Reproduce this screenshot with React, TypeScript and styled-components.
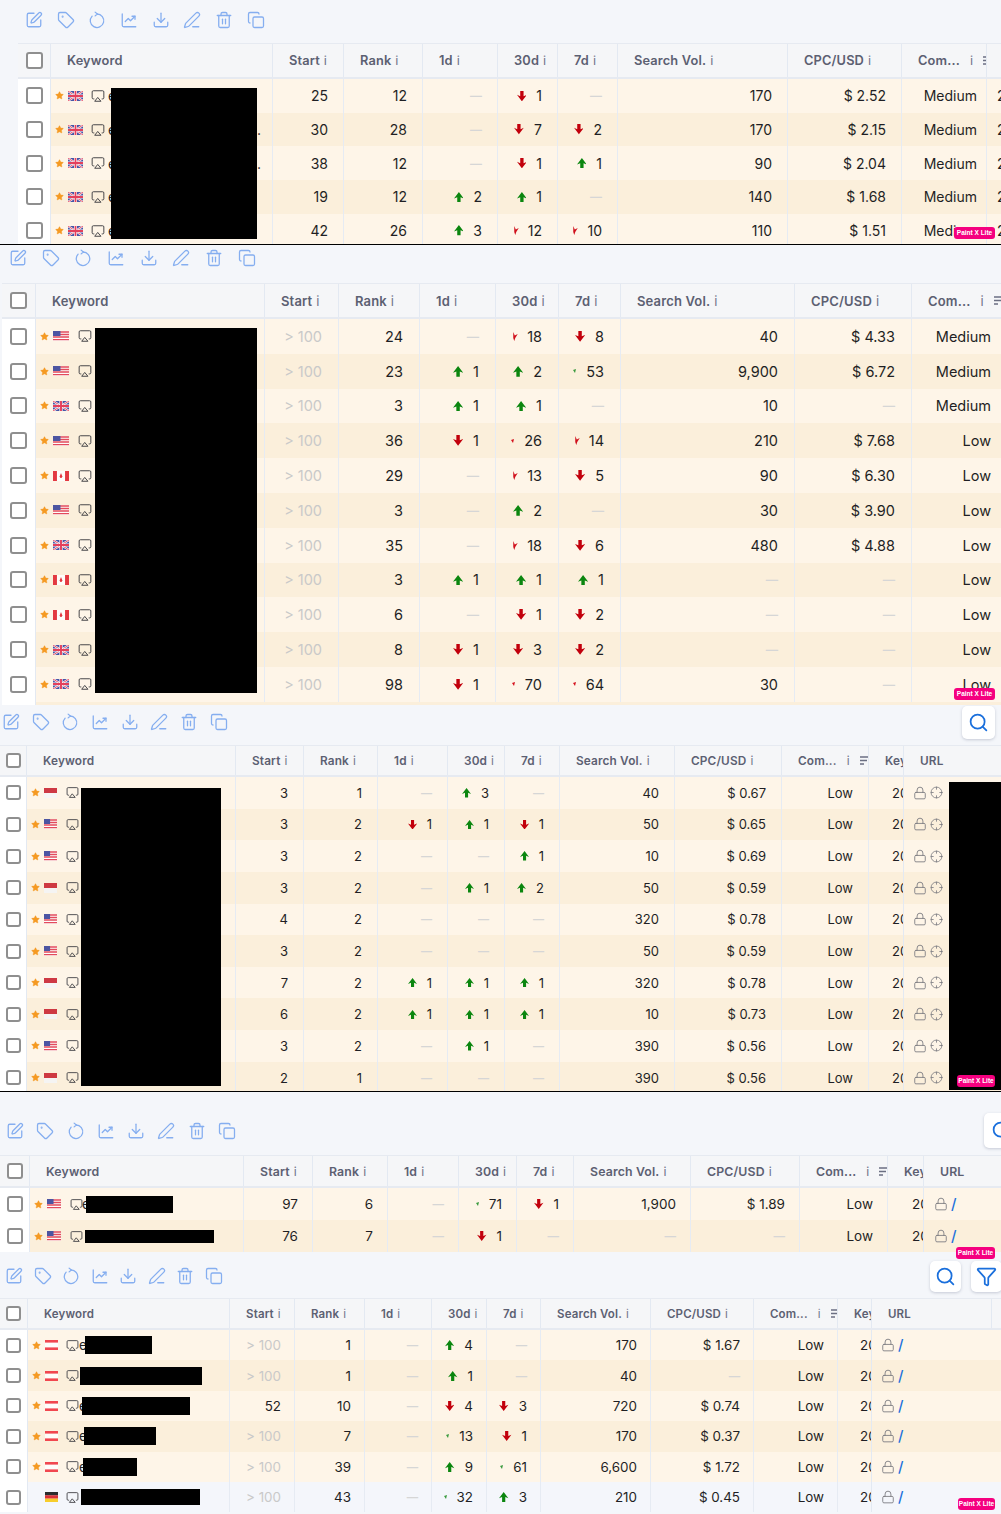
import React from "react";
import styled, { createGlobalStyle } from "styled-components";
import { Airplay, Copy, Crosshair, Download, Filter, Lock, PenLine, Search, SquarePen, Star, Tag, Trash2 } from "lucide-react";

const GlobalStyle = createGlobalStyle`
  html, body { margin: 0; padding: 0; background: #f4f6fa; }
  body { font-family: Inter, "Liberation Sans", sans-serif; color: #1f1f24; }
`;

const Page = styled.div`
  position: relative;
  width: 1001px;
  height: 1514px;
  overflow: hidden;
  background: #f4f6fa;
`;

const Panel = styled.section<{ $h: number; $left: number; $font: number; $line?: boolean }>`
  position: relative;
  box-sizing: border-box;
  height: ${(p) => p.$h}px;
  padding-left: ${(p) => p.$left}px;
  overflow: hidden;
  font-size: ${(p) => p.$font}px;
  border-bottom: ${(p) => (p.$line ? "1px solid #000" : "none")};
`;

const Toolbar = styled.div<{ $h: number; $top: number; $start: number; $pitch: number }>`
  box-sizing: border-box;
  display: flex;
  align-items: flex-start;
  height: ${(p) => p.$h}px;
  margin-left: ${(p) => p.$start}px;
  padding-top: ${(p) => p.$top}px;
  gap: ${(p) => p.$pitch - 18}px;
  color: #85aef0;
`;

const ToolIcon = styled.span`
  display: flex;
  width: 18px;
  height: 18px;
  flex: none;
`;

const Actions = styled.div<{ $top: number; $right: number }>`
  display: flex;
  gap: 10px;
  margin-left: auto;
  margin-top: ${(p) => p.$top}px;
  margin-right: ${(p) => p.$right}px;
`;

const ActionButton = styled.div<{ $size: number }>`
  display: flex;
  align-items: center;
  justify-content: center;
  width: ${(p) => p.$size}px;
  height: ${(p) => p.$size}px;
  flex: none;
  background: #fff;
  border-radius: 5px;
  box-shadow: 0 1px 3px rgba(90, 100, 130, 0.3);
  color: #1a6fdc;
`;

const Row = styled.div<{ $cols: string; $h: number; $bg: string }>`
  display: grid;
  grid-template-columns: ${(p) => p.$cols};
  height: ${(p) => p.$h}px;
  background: ${(p) => p.$bg};
`;

const HeadRow = styled(Row)`
  box-sizing: border-box;
  border-top: 1px solid #e6eaf1;
  border-bottom: 2px solid #e6eaf1;
`;

const HeadCell = styled.div<{ $size: number }>`
  display: flex;
  align-items: center;
  padding-left: 16px;
  overflow: hidden;
  white-space: nowrap;
  font-size: ${(p) => p.$size}px;
  font-weight: 600;
  letter-spacing: 0.15px;
  color: #5c6072;
  border-right: 1px solid #e3e9f2;
`;

const InfoMark = styled.span`
  margin-left: 4px;
  font-weight: 400;
  color: #70748a;
`;

const SpacedMark = styled(InfoMark)`
  margin-left: 10px;
  margin-right: 10px;
`;

const CheckCell = styled.div<{ $bg: string }>`
  display: flex;
  align-items: center;
  justify-content: center;
  background: ${(p) => p.$bg};
  border-right: 1px solid #e3e9f2;
`;

const CheckBox = styled.span<{ $size: number }>`
  box-sizing: border-box;
  display: block;
  width: ${(p) => p.$size}px;
  height: ${(p) => p.$size}px;
  background: #fff;
  border: 2px solid #8f8f8f;
  border-radius: 3px;
`;

const Cell = styled.div<{ $pad: number }>`
  display: flex;
  align-items: center;
  justify-content: flex-end;
  gap: 10px;
  padding-right: ${(p) => p.$pad}px;
  white-space: nowrap;
  overflow: hidden;
  border-right: 1px solid #e6ebf3;
`;

const Muted = styled.span`
  color: #c9c9c9;
`;

const Dash = styled.span`
  font-size: 0.85em;
  font-weight: 600;
  color: #d6d6d6;
`;

const KeywordCell = styled.div`
  display: flex;
  align-items: center;
  padding-left: 4px;
  overflow: hidden;
  border-right: 1px solid #e6ebf3;
`;

const StarSlot = styled.span`
  display: flex;
  width: 9px;
  flex: none;
  margin-right: 4px;
  color: #f59a23;
`;

const FlagSlot = styled.span<{ $w: number; $gap: number }>`
  display: flex;
  width: ${(p) => p.$w}px;
  height: 10px;
  flex: none;
  margin-right: ${(p) => p.$gap}px;
  opacity: 0.88;

  svg {
    width: 100%;
    height: 100%;
  }
`;

const ScreenSlot = styled.span`
  display: flex;
  flex: none;
  color: #3b3b40;
`;

const HiddenGlyph = styled.span<{ $shift: number }>`
  position: relative;
  left: ${(p) => p.$shift}px;
  width: 0;
  color: #222;
`;

const TailDots = styled.span`
  margin-left: auto;
  margin-right: 11px;
`;

const InlineRedact = styled.span<{ $w: number; $h: number; $at: number }>`
  display: block;
  position: relative;
  width: ${(p) => p.$w}px;
  height: ${(p) => p.$h}px;
  flex: none;
  margin-left: ${(p) => p.$at}px;
  background: #000;
`;

const Redact = styled.div<{ $x: number; $y: number; $w: number; $h: number }>`
  position: absolute;
  left: ${(p) => p.$x}px;
  top: ${(p) => p.$y}px;
  width: ${(p) => p.$w}px;
  height: ${(p) => p.$h}px;
  background: #000;
`;

const KeyCell = styled.div<{ $pad: number }>`
  display: flex;
  align-items: center;
  padding-left: ${(p) => p.$pad}px;
  overflow: hidden;
  white-space: nowrap;
  border-right: 1px solid #e3e9f2;
`;

const UrlCell = styled.div<{ $pad: number }>`
  display: flex;
  align-items: center;
  gap: 3px;
  padding-left: ${(p) => p.$pad}px;
  color: #7a7a80;
`;

const Slash = styled.span`
  font-size: 1.1em;
  font-weight: 500;
  color: #1a6fdc;
`;

const Badge = styled.div<{ $x: number; $y: number; $w: number }>`
  position: absolute;
  left: ${(p) => p.$x}px;
  top: ${(p) => p.$y}px;
  width: ${(p) => p.$w}px;
  height: 12px;
  border-radius: 3px;
  background: #f5007f;
  color: #fff;
  font-family: "Liberation Sans", sans-serif;
  font-size: 6.5px;
  font-weight: 700;
  line-height: 12px;
  text-align: center;
  white-space: nowrap;
`;

const Arrow = ({ up }: { up: boolean }) => (
  <svg width="0.7em" height="0.74em" viewBox="0 0 10 10.5" style={{ flex: "none" }}>
    <path
      d={up ? "M5 0L10 6.6L6.7 5.3V10.5H3.3V5.3L0 6.6Z" : "M5 10.5L10 3.9L6.7 5.2V0H3.3V5.2L0 3.9Z"}
      fill={up ? "#0b860f" : "#c2000c"}
    />
  </svg>
);

const Sliver = () => (
  <svg width="5" height="9" viewBox="0 0 4.5 9" style={{ flex: "none", marginRight: -1 }}>
    <path d="M0 0L1.5 3.5L4.5 2L2 6L1 9L0 6Z" fill="#d0101c" />
  </svg>
);

const Speck = ({ green }: { green: boolean }) => (
  <svg width="3" height="4" viewBox="0 0 3 4" style={{ flex: "none" }}>
    <path d="M0 1L3 0L2 4Z" fill={green ? "#3a9a3e" : "#d4101c"} />
  </svg>
);

const Sort = () => (
  <svg width="10" height="9" viewBox="0 0 10 9" style={{ flex: "none" }}>
    <path d="M0 1H10M0 4.5H7M0 8H4" stroke="#6b6f82" strokeWidth="1.4" />
  </svg>
);

const Rotate = () => (
  <svg width="18" height="18" viewBox="0 0 24 24" fill="none" stroke="currentColor" strokeWidth="1.7" strokeLinecap="round" strokeLinejoin="round">
    <path d="M12 4A9 9 0 1 1 5.5 6.8" />
    <path d="M9.5 1.5L12.5 4L9.5 6.5" />
  </svg>
);

const Chart = () => (
  <svg width="18" height="18" viewBox="0 0 24 24" fill="none" stroke="currentColor" strokeWidth="1.7" strokeLinecap="round" strokeLinejoin="round">
    <path d="M3 4v15a2 2 0 0 0 2 2h16" />
    <path d="M7 14l4-4 3 3 6-6" />
    <path d="M16 7h4v4" />
  </svg>
);

const Flag = ({ code }: { code: string }) => {
  if (code === "gb") {
    return (
      <svg viewBox="0 0 15 10" preserveAspectRatio="none">
        <rect width="15" height="10" fill="#2f3f9e" />
        <path d="M0 0L15 10M15 0L0 10" stroke="#fff" strokeWidth="2" />
        <path d="M0 0L15 10M15 0L0 10" stroke="#e0284a" strokeWidth="0.9" />
        <path d="M7.5 0V10M0 5H15" stroke="#fff" strokeWidth="3" />
        <path d="M7.5 0V10M0 5H15" stroke="#e0284a" strokeWidth="1.8" />
      </svg>
    );
  }
  if (code === "us") {
    return (
      <svg viewBox="0 0 15 10" preserveAspectRatio="none">
        <rect width="15" height="10" fill="#fff" />
        <path d="M0 1H15M0 3.5H15M0 6H15M0 8.7H15" stroke="#e0344a" strokeWidth="1.3" />
        <rect width="7" height="5" fill="#34409a" />
      </svg>
    );
  }
  if (code === "ca") {
    return (
      <svg viewBox="0 0 15 10" preserveAspectRatio="none">
        <rect width="15" height="10" fill="#fff" />
        <rect width="3.7" height="10" fill="#e0202c" />
        <rect x="11.3" width="3.7" height="10" fill="#e0202c" />
        <path d="M7.5 2L8.8 5.5L8 7H7L6.2 5.5Z" fill="#e0202c" />
      </svg>
    );
  }
  if (code === "id") {
    return (
      <svg viewBox="0 0 15 10" preserveAspectRatio="none">
        <rect width="15" height="10" fill="#f5f5f7" />
        <rect width="15" height="5" fill="#c8202e" />
      </svg>
    );
  }
  if (code === "at") {
    return (
      <svg viewBox="0 0 15 10" preserveAspectRatio="none">
        <rect width="15" height="10" fill="#fff" />
        <rect width="15" height="2.6" fill="#f0303c" />
        <rect y="7.4" width="15" height="2.6" fill="#f0303c" />
      </svg>
    );
  }
  return (
    <svg viewBox="0 0 15 10" preserveAspectRatio="none">
      <rect width="15" height="3.4" fill="#111" />
      <rect y="3.3" width="15" height="3.4" fill="#d8141c" />
      <rect y="6.6" width="15" height="3.4" fill="#f8c810" />
    </svg>
  );
};

// one cell of a change column: u1 up, d1 down, r18 sliver, p26 red speck, q53 green speck
const Trend = ({ value, pad }: { value: string; pad: number }) => {
  if (value === "-") return <Cell $pad={pad}><Dash>—</Dash></Cell>;
  const kind = value[0];
  const num = value.slice(1);
  return (
    <Cell $pad={pad}>
      {kind === "u" && <Arrow up />}
      {kind === "d" && <Arrow up={false} />}
      {kind === "r" && <Sliver />}
      {kind === "p" && <Speck green={false} />}
      {kind === "q" && <Speck green />}
      <span>{num}</span>
    </Cell>
  );
};

const Plain = ({ value, pad }: { value: string; pad: number }) => {
  if (value === "-") return <Cell $pad={pad}><Dash>—</Dash></Cell>;
  if (value === ">100") return <Cell $pad={pad}><Muted>&gt; 100</Muted></Cell>;
  return <Cell $pad={pad}>{value}</Cell>;
};

type RowData = {
  flag: string;
  vals: string[];
  com: string;
  box?: [number, number, number];
  glyph?: boolean;
  dots?: boolean;
  plain?: boolean;
};

type PanelConfig = {
  h: number;
  left: number;
  font: number;
  head: number;
  line?: boolean;
  toolH: number;
  toolTop: number;
  toolStart: number;
  pitch: number;
  headH: number;
  rowH: number;
  cols: string;
  check: number;
  pad: number;
  comPad: number;
  keyPad: number;
  urlPad: number;
  url: "target" | "slash";
  iconSize: number;
  flagW: number;
  flagGap: number;
  glyphShift: number;
  actions?: { top: number; right: number; size: number; filter?: boolean };
  rows: RowData[];
  filler?: boolean;
  covers?: { x: number; y: number; w: number; h: number }[];
};

const r = (flag: string, line: string, com: string, extra: Partial<RowData> = {}): RowData => ({
  flag,
  vals: line.split(" "),
  com,
  ...extra,
});

const panels: PanelConfig[] = [
  {
    h: 245, left: 18, font: 14, head: 12.8, line: true, toolH: 43, toolTop: 11, toolStart: 7, pitch: 31.7, headH: 36, rowH: 33.7,
    cols: "33px 222px 71px 79px 75px 60px 60px 170px 114px 85px 60px 60px", check: 17, pad: 15, comPad: 9, keyPad: 10, urlPad: 9, url: "target", iconSize: 14, flagW: 15, flagGap: 8, glyphShift: 3,
    covers: [{ x: 111, y: 88, w: 146, h: 151 }],
    rows: [
      r("gb", "25 12 - d1 - 170 $2.52", "Medium", { glyph: true }),
      r("gb", "30 28 - d7 d2 170 $2.15", "Medium", { glyph: true, dots: true }),
      r("gb", "38 12 - d1 u1 90 $2.04", "Medium", { glyph: true, dots: true }),
      r("gb", "19 12 u2 u1 - 140 $1.68", "Medium", { glyph: true }),
      r("gb", "42 26 u3 r12 r10 110 $1.51", "Medium", { glyph: true }),
    ],
  },
  {
    h: 460, left: 2, font: 14.5, head: 13, toolH: 38, toolTop: 4, toolStart: 7, pitch: 32.7, headH: 36, rowH: 34.8,
    cols: "34px 229px 74px 81px 76px 63px 62px 174px 117px 95px 60px 60px", check: 17, pad: 16, comPad: 15, keyPad: 10, urlPad: 9, url: "target", iconSize: 14, flagW: 16, flagGap: 9, glyphShift: 0, filler: true,
    covers: [{ x: 95, y: 83, w: 162, h: 365 }],
    rows: [
      r("us", ">100 24 - r18 d8 40 $4.33", "Medium"),
      r("us", ">100 23 u1 u2 q53 9,900 $6.72", "Medium"),
      r("gb", ">100 3 u1 u1 - 10 -", "Medium"),
      r("us", ">100 36 d1 p26 r14 210 $7.68", "Low"),
      r("ca", ">100 29 - r13 d5 90 $6.30", "Low"),
      r("us", ">100 3 - u2 - 30 $3.90", "Low"),
      r("gb", ">100 35 - r18 d6 480 $4.88", "Low"),
      r("ca", ">100 3 u1 u1 u1 - -", "Low"),
      r("ca", ">100 6 - d1 d2 - -", "Low"),
      r("gb", ">100 8 d1 d3 d2 - -", "Low"),
      r("gb", ">100 98 d1 p70 p64 30 -", "Low"),
    ],
  },
  {
    h: 387, left: 0, font: 13, head: 11.8, line: true, toolH: 40, toolTop: 8, toolStart: 2, pitch: 29.7, headH: 32, rowH: 31.65,
    cols: "27px 209px 68px 74px 70px 57px 55px 115px 107px 87px 35px 120px", check: 15, pad: 15, comPad: 15, keyPad: 23, urlPad: 9, url: "target", iconSize: 13, flagW: 13, flagGap: 9, glyphShift: 0,
    actions: { top: -7, right: 6, size: 33 },
    covers: [{ x: 81, y: 83, w: 140, h: 298 }, { x: 949, y: 77, w: 52, h: 308 }],
    rows: [
      r("id", "3 1 - u3 - 40 $0.67", "Low"),
      r("us", "3 2 d1 u1 d1 50 $0.65", "Low"),
      r("us", "3 2 - - u1 10 $0.69", "Low"),
      r("id", "3 2 - u1 u2 50 $0.59", "Low"),
      r("us", "4 2 - - - 320 $0.78", "Low"),
      r("us", "3 2 - - - 50 $0.59", "Low"),
      r("id", "7 2 u1 u1 u1 320 $0.78", "Low"),
      r("id", "6 2 u1 u1 u1 10 $0.73", "Low"),
      r("us", "3 2 - u1 - 390 $0.56", "Low"),
      r("id", "2 1 - - - 390 $0.56", "Low"),
    ],
  },
  {
    h: 162, left: 0, font: 13.5, head: 12.3, toolH: 63, toolTop: 30, toolStart: 6, pitch: 30.3, headH: 33, rowH: 32,
    cols: "30px 214px 69px 75px 71px 58px 57px 117px 109px 88px 36px 120px", check: 16, pad: 14, comPad: 14, keyPad: 24, urlPad: 10, url: "slash", iconSize: 13, flagW: 14, flagGap: 9, glyphShift: -1,
    actions: { top: -9, right: -18, size: 35 },
    rows: [
      r("us", "97 6 - q71 d1 1,900 $1.89", "Low", { box: [87, 17, 3], glyph: true }),
      r("us", "76 7 - d1 - - -", "Low", { box: [129, 13, 2] }),
    ],
  },
  {
    h: 260, left: 0, font: 13.4, head: 11.5, toolH: 44, toolTop: 13, toolStart: 5, pitch: 28.5, headH: 32, rowH: 30.4,
    cols: "28px 202px 65px 70px 67px 55px 54px 110px 103px 84px 34px 120px", check: 15, pad: 13, comPad: 13, keyPad: 22, urlPad: 9, url: "slash", iconSize: 13, flagW: 13, flagGap: 8, glyphShift: 0,
    actions: { top: -6, right: -1, size: 31, filter: true },
    rows: [
      r("at", ">100 1 - u4 - 170 $1.67", "Low", { box: [67, 18, 6], glyph: true }),
      r("at", ">100 1 - u1 - 40 -", "Low", { box: [122, 18, 1] }),
      r("at", "52 10 - d4 d3 720 $0.74", "Low", { box: [108, 18, 3], glyph: true }),
      r("at", ">100 7 - q13 d1 170 $0.37", "Low", { box: [72, 18, 5], glyph: true }),
      r("at", ">100 39 - u9 q61 6,600 $1.72", "Low", { box: [54, 18, 4], glyph: true }),
      r("de", ">100 43 - q32 u3 210 $0.45", "Low", { box: [119, 16, 2], plain: true }),
    ],
  },
];

const badges = [
  { x: 954, y: 227, w: 41, label: "Paint X Lite" },
  { x: 954, y: 688, w: 41, label: "Paint X Lite" },
  { x: 957, y: 1075, w: 38, label: "Paint X Lite" },
  { x: 956, y: 1247, w: 39, label: "Paint X Lite" },
  { x: 958, y: 1498, w: 37, label: "Paint X Lite" },
];

const toolIcons = [
  <SquarePen size={18} strokeWidth={1.7} />,
  <Tag size={18} strokeWidth={1.7} />,
  <Rotate />,
  <Chart />,
  <Download size={18} strokeWidth={1.7} />,
  <PenLine size={18} strokeWidth={1.7} />,
  <Trash2 size={18} strokeWidth={1.7} />,
  <Copy size={18} strokeWidth={1.7} />,
];

const money = (v: string) => (v.startsWith("$") ? "$ " + v.slice(1) : v);

function KeywordTable({ cfg }: { cfg: PanelConfig }) {
  return (
    <>
      <HeadRow $cols={cfg.cols} $h={cfg.headH} $bg="#f5f6f8">
        <CheckCell $bg="#f5f6f8"><CheckBox $size={cfg.check} /></CheckCell>
        <HeadCell $size={cfg.head}>Keyword</HeadCell>
        {["Start", "Rank", "1d", "30d", "7d", "Search Vol.", "CPC/USD"].map((name) => (
          <HeadCell key={name} $size={cfg.head}>{name}<InfoMark>i</InfoMark></HeadCell>
        ))}
        <HeadCell $size={cfg.head}>Com...<SpacedMark>i</SpacedMark><Sort /></HeadCell>
        <HeadCell $size={cfg.head}>Key</HeadCell>
        <HeadCell $size={cfg.head}>URL</HeadCell>
      </HeadRow>
      {cfg.rows.map((row, i) => {
        const bg = row.plain ? "#f4f6fb" : i % 2 === 0 ? "#fef5e8" : "#fbefdb";
        return (
          <Row key={i} $cols={cfg.cols} $h={cfg.rowH} $bg={bg}>
            <CheckCell $bg="#fff"><CheckBox $size={cfg.check} /></CheckCell>
            <KeywordCell>
              <StarSlot>{!row.plain && <Star size={9} fill="currentColor" strokeWidth={1} />}</StarSlot>
              <FlagSlot $w={cfg.flagW} $gap={cfg.flagGap}><Flag code={row.flag} /></FlagSlot>
              <ScreenSlot><Airplay size={cfg.iconSize} strokeWidth={1.6} /></ScreenSlot>
              {row.glyph && <HiddenGlyph $shift={cfg.glyphShift}>e</HiddenGlyph>}
              {row.box && <InlineRedact $w={row.box[0]} $h={row.box[1]} $at={row.box[2]} />}
              {row.dots && <TailDots>.</TailDots>}
            </KeywordCell>
            <Plain value={row.vals[0]} pad={cfg.pad} />
            <Plain value={row.vals[1]} pad={cfg.pad} />
            <Trend value={row.vals[2]} pad={cfg.pad} />
            <Trend value={row.vals[3]} pad={cfg.pad} />
            <Trend value={row.vals[4]} pad={cfg.pad} />
            <Plain value={row.vals[5]} pad={cfg.pad} />
            <Plain value={money(row.vals[6])} pad={cfg.pad} />
            <Cell $pad={cfg.comPad}>{row.com}</Cell>
            <KeyCell $pad={cfg.keyPad}>2024</KeyCell>
            <UrlCell $pad={cfg.urlPad}>
              <Lock size={cfg.iconSize + 1} strokeWidth={1.5} />
              {cfg.url === "target" ? <Crosshair size={cfg.iconSize} strokeWidth={1.5} /> : <Slash>/</Slash>}
            </UrlCell>
          </Row>
        );
      })}
      {cfg.filler && <Row $cols={cfg.cols} $h={cfg.rowH} $bg="#fbefdb"><CheckCell $bg="#fff" /></Row>}
    </>
  );
}

export default function App() {
  return (
    <Page>
      <GlobalStyle />
      {panels.map((cfg, i) => (
        <Panel key={i} $h={cfg.h} $left={cfg.left} $font={cfg.font} $line={cfg.line}>
          <Toolbar $h={cfg.toolH} $top={cfg.toolTop} $start={cfg.toolStart} $pitch={cfg.pitch}>
            {toolIcons.map((icon, n) => <ToolIcon key={n}>{icon}</ToolIcon>)}
            {cfg.actions && (
              <Actions $top={cfg.actions.top} $right={cfg.actions.right}>
                <ActionButton $size={cfg.actions.size}><Search size={21} strokeWidth={2} /></ActionButton>
                {cfg.actions.filter && <ActionButton $size={cfg.actions.size}><Filter size={21} strokeWidth={2} /></ActionButton>}
              </Actions>
            )}
          </Toolbar>
          <KeywordTable cfg={cfg} />
          {cfg.covers?.map((c, n) => <Redact key={n} $x={c.x} $y={c.y} $w={c.w} $h={c.h} />)}
        </Panel>
      ))}
      {badges.map((b) => <Badge key={b.y} $x={b.x} $y={b.y} $w={b.w}>{b.label}</Badge>)}
    </Page>
  );
}
